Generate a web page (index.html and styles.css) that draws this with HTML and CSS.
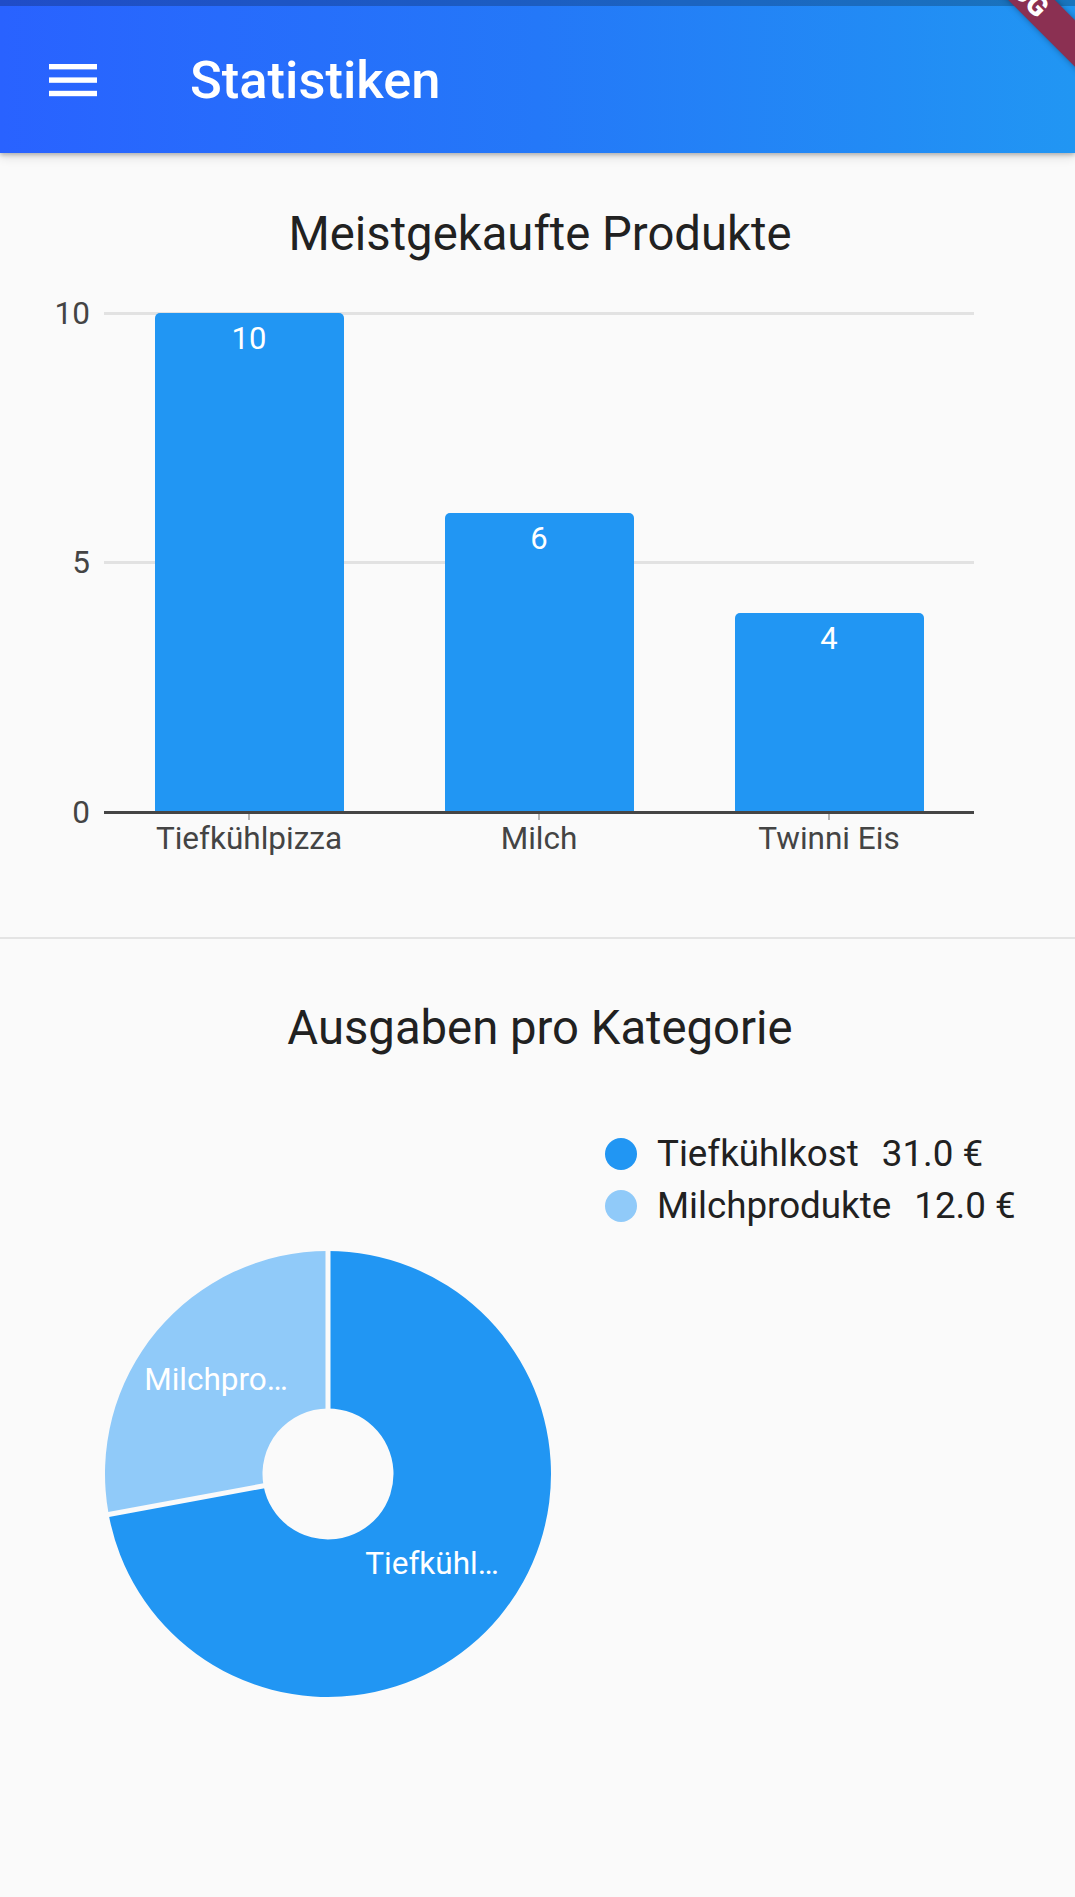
FILE: index.html
```html
<!DOCTYPE html>
<html lang="de">
<head>
<meta charset="utf-8">
<title>Statistiken</title>
<link rel="stylesheet" href="styles.css">
</head>
<body>
<header class="header">
  <div class="statusbar"></div>
  <div class="appbar">
    <button class="menu-btn" aria-label="Menü">
      <svg class="menu-icon" viewBox="0 0 48 36" width="48" height="36" aria-hidden="true">
        <rect x="0" y="2" width="48" height="5.4" fill="#ffffff"/>
        <rect x="0" y="15.4" width="48" height="5.4" fill="#ffffff"/>
        <rect x="0" y="28.8" width="48" height="5.4" fill="#ffffff"/>
      </svg>
    </button>
    <h1 class="appbar-title">Statistiken</h1>
  </div>
  <div class="debug-banner"><span>DEBUG</span></div>
</header>

<main class="content">
  <section class="bar-section">
    <h2 class="section-title">Meistgekaufte Produkte</h2>
    <div class="bar-chart">
      <div class="y-axis">
        <span>10</span>
        <span>5</span>
        <span>0</span>
      </div>
      <div class="plot">
        <div class="grid">
          <div class="grid-line"></div>
          <div class="grid-line"></div>
          <div class="grid-line grid-line--hidden"></div>
        </div>
        <div class="bars">
          <div class="bar-slot"><div class="bar" style="height:100%"><span class="bar-value">10</span></div></div>
          <div class="bar-slot"><div class="bar" style="height:60%"><span class="bar-value">6</span></div></div>
          <div class="bar-slot"><div class="bar" style="height:40%"><span class="bar-value">4</span></div></div>
        </div>
        <div class="axis-line"></div>
      </div>
      <div class="x-axis">
        <div class="x-cell"><span class="tick"></span><span class="x-label">Tiefkühlpizza</span></div>
        <div class="x-cell"><span class="tick"></span><span class="x-label">Milch</span></div>
        <div class="x-cell"><span class="tick"></span><span class="x-label">Twinni Eis</span></div>
      </div>
    </div>
  </section>

  <hr class="divider">

  <section class="pie-section">
    <h2 class="section-title section-title--pie">Ausgaben pro Kategorie</h2>
    <div class="pie-row">
      <div class="donut">
        <svg viewBox="0 0 460 460" width="460" height="460" aria-label="Ausgaben pro Kategorie">
          <path d="M 230 7 A 223 223 0 1 1 10.71 270.50 L 165.59 241.90 A 65.5 65.5 0 1 0 230 164.5 Z" fill="#2196f3"/>
          <path d="M 10.71 270.50 A 223 223 0 0 1 230 7 L 230 164.5 A 65.5 65.5 0 0 0 165.59 241.90 Z" fill="#90caf9"/>
          <line x1="230" y1="170" x2="230" y2="0" stroke="#fafafa" stroke-width="5"/>
          <line x1="171.5" y1="240.8" x2="3.8" y2="271.8" stroke="#fafafa" stroke-width="5"/>
          <text class="donut-label" x="118" y="146" text-anchor="middle">Milchpro…</text>
          <text class="donut-label" x="334" y="330" text-anchor="middle">Tiefkühl…</text>
        </svg>
      </div>
      <ul class="legend">
        <li class="legend-item">
          <span class="legend-dot legend-dot--dark"></span>
          <span class="legend-name">Tiefkühlkost</span>
          <span class="legend-value">31.0 €</span>
        </li>
        <li class="legend-item">
          <span class="legend-dot legend-dot--light"></span>
          <span class="legend-name">Milchprodukte</span>
          <span class="legend-value">12.0 €</span>
        </li>
      </ul>
    </div>
  </section>
</main>
</body>
</html>
```

FILE: styles.css
```css
* {
  box-sizing: border-box;
}

html, body {
  margin: 0;
  padding: 0;
}

body {
  background: #fafafa;
  font-family: Roboto, "Noto Sans", "Liberation Sans", sans-serif;
  color: #212121;
  width: 1075px;
  min-height: 1897px;
  overflow: hidden;
}

/* ---------- header ---------- */
.header {
  position: relative;
  overflow: hidden;
  background: linear-gradient(to right, #2962ff 0%, #2478f8 50%, #2196f3 100%);
  box-shadow: 0 2px 4px rgba(0, 0, 0, 0.22), 0 4px 10px rgba(0, 0, 0, 0.12);
  z-index: 2;
}

.statusbar {
  height: 6px;
  background: rgba(0, 0, 0, 0.22);
}

.appbar {
  height: 147px;
  display: flex;
  align-items: center;
}

.menu-btn {
  margin: 0 0 0 49px;
  padding: 0;
  border: 0;
  background: transparent;
  width: 48px;
  height: 36px;
  display: flex;
  align-items: center;
}

.menu-icon {
  display: block;
}

.appbar-title {
  margin: 2px 0 0 93px;
  font-size: 52.5px;
  font-weight: 500;
  color: #ffffff;
  line-height: 1;
  letter-spacing: 0;
}

.debug-banner {
  position: absolute;
  left: 862px;
  top: -36px;
  width: 300px;
  height: 33px;
  transform: rotate(45deg);
  background: #8b3052;
  box-shadow: 0 0 6px rgba(0, 0, 0, 0.35);
  display: flex;
  align-items: center;
  justify-content: center;
}

.debug-banner span {
  color: #ffffff;
  font-weight: 900;
  font-size: 28px;
  line-height: 1;
}

/* ---------- content ---------- */
.content {
  display: flex;
  flex-direction: column;
}

.section-title {
  margin: 0;
  padding-left: 5px;
  text-align: center;
  font-size: 47.25px;
  font-weight: 400;
  line-height: 1.171;
  color: #212121;
}

.bar-section {
  padding-top: 54px;
}

.bar-chart {
  display: grid;
  grid-template-columns: 90px 870px;
  column-gap: 14px;
  margin-top: 51px;
}

.y-axis {
  display: flex;
  flex-direction: column;
  justify-content: space-between;
  align-items: flex-end;
  margin: -18.5px 0;
  font-size: 31.5px;
  line-height: 37px;
  color: #444444;
}

.plot {
  position: relative;
  height: 499px;
}

.grid {
  position: absolute;
  left: 0;
  right: 0;
  top: -1.5px;
  bottom: -1.5px;
  display: flex;
  flex-direction: column;
  justify-content: space-between;
}

.grid-line {
  height: 3px;
  background: #e2e2e2;
}

.grid-line--hidden {
  background: transparent;
}

.bars {
  position: relative;
  height: 100%;
  display: grid;
  grid-template-columns: repeat(3, 1fr);
}

.bar-slot {
  display: flex;
  justify-content: center;
  align-items: flex-end;
}

.bar {
  width: 189px;
  background: #2196f3;
  border-radius: 5px 5px 0 0;
  display: flex;
  justify-content: center;
  padding-top: 8px;
}

.bar-value {
  color: #ffffff;
  font-size: 31px;
  line-height: 1.171;
}

.axis-line {
  position: absolute;
  left: 0;
  right: 0;
  bottom: -1.5px;
  height: 2.5px;
  background: #454545;
}

.x-axis {
  grid-column: 2;
  display: grid;
  grid-template-columns: repeat(3, 1fr);
}

.x-cell {
  display: flex;
  flex-direction: column;
  align-items: center;
}

.tick {
  width: 2px;
  height: 7px;
  margin: 1px 0 1px;
  background: #b5b5b5;
}

.x-label {
  font-size: 31.5px;
  line-height: 1.171;
  color: #444444;
}

.divider {
  margin: 79px 0 0 0;
  border: 0;
  height: 2px;
  background: #e4e4e4;
}

/* ---------- pie ---------- */
.pie-section {
  padding-top: 62px;
}

.pie-row {
  display: flex;
  align-items: flex-start;
  margin-top: 71px;
}

.donut {
  margin: 116px 0 0 98px;
  width: 460px;
  height: 460px;
}

.donut svg {
  display: block;
}

.donut-label {
  fill: #ffffff;
  font-family: Roboto, "Noto Sans", "Liberation Sans", sans-serif;
  font-size: 31.5px;
}

.legend {
  list-style: none;
  margin: 0 0 0 47px;
  padding: 0;
}

.legend-item {
  display: flex;
  align-items: center;
  height: 52.5px;
  font-size: 36.75px;
  line-height: 52.5px;
  color: #212121;
}

.legend-dot {
  width: 32px;
  height: 32px;
  border-radius: 50%;
  margin-right: 20px;
  flex: none;
}

.legend-dot--dark {
  background: #2196f3;
}

.legend-dot--light {
  background: #90caf9;
}

.legend-value {
  margin-left: 23px;
}
```
